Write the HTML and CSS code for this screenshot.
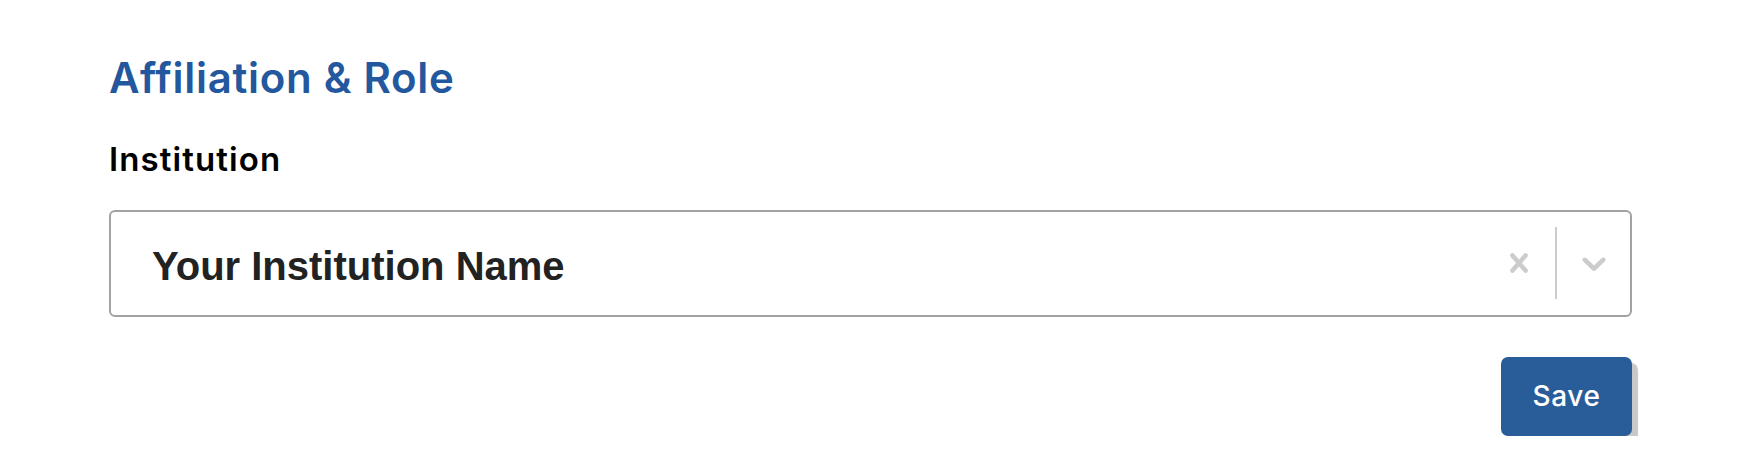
FILE: index.html
```html
<!DOCTYPE html>
<html lang="en">
<head>
<meta charset="utf-8">
<title>Affiliation &amp; Role</title>
<link rel="stylesheet" href="styles.css">
</head>
<body>
<main class="page">
  <section class="section">
    <h2 class="section-title">Affiliation &amp; Role</h2>
    <div class="field">
      <label class="field-label">Institution</label>
      <div class="select">
        <div class="select-value">Your Institution Name</div>
        <div class="select-indicators">
          <div class="indicator">
            <svg class="icon" viewBox="0 0 20 20" width="38" height="38" aria-hidden="true"><path d="M14.348 14.849c-0.469 0.469-1.229 0.469-1.697 0l-2.651-3.030-2.651 3.029c-0.469 0.469-1.229 0.469-1.697 0-0.469-0.469-0.469-1.229 0-1.697l2.758-3.15-2.759-3.152c-0.469-0.469-0.469-1.228 0-1.697s1.228-0.469 1.697 0l2.652 3.031 2.651-3.031c0.469-0.469 1.228-0.469 1.697 0s0.469 1.229 0 1.697l-2.758 3.152 2.758 3.15c0.469 0.469 0.469 1.229 0 1.698z"/></svg>
          </div>
          <span class="separator"></span>
          <div class="indicator">
            <svg class="icon" viewBox="0 0 20 20" width="40" height="40" aria-hidden="true"><path d="M4.516 7.548c0.436-0.446 1.043-0.481 1.576 0l3.908 3.747 3.908-3.747c0.533-0.481 1.141-0.446 1.574 0 0.436 0.445 0.408 1.197 0 1.615-0.406 0.418-4.695 4.502-4.695 4.502-0.217 0.223-0.502 0.335-0.787 0.335s-0.57-0.112-0.789-0.335c0 0-4.287-4.084-4.695-4.502s-0.436-1.170 0-1.615z"/></svg>
          </div>
        </div>
      </div>
    </div>
    <div class="actions">
      <button class="btn-save" type="button">Save</button>
    </div>
  </section>
</main>
</body>
</html>
```

FILE: styles.css
```css
html, body {
  margin: 0;
  padding: 0;
  background: #ffffff;
}

body {
  font-family: "Inter", "Open Sans", sans-serif;
  color: #000;
}

.page {
  padding: 53px 106px 0 109px;
}

.section-title {
  margin: 0;
  font-size: 42px;
  font-weight: 600;
  line-height: 1.2;
  letter-spacing: 0.7px;
  color: #23579e;
}

.field {
  margin-top: 37px;
}

.field-label {
  display: block;
  font-size: 33px;
  font-weight: 600;
  line-height: 1.2;
  letter-spacing: 1.1px;
  color: #000;
}

.select {
  margin-top: 30px;
  box-sizing: border-box;
  height: 107px;
  border: 2px solid #a2a2a2;
  border-radius: 6px;
  display: flex;
  align-items: center;
  background: #fff;
}

.select-value {
  flex: 1;
  padding-left: 41px;
  padding-top: 7px;
  font-family: "Liberation Sans", Arial, sans-serif;
  font-weight: 700;
  font-size: 40px;
  color: #222;
}

.select-indicators {
  display: flex;
  align-items: center;
  align-self: stretch;
}

.indicator {
  width: 73px;
  display: flex;
  align-items: center;
  justify-content: center;
}

.icon {
  fill: #cccccc;
  display: block;
}

.separator {
  align-self: stretch;
  width: 2px;
  margin: 15px 0 16px;
  background: #cccccc;
}

.actions {
  display: flex;
  justify-content: flex-end;
  margin-top: 40px;
}

.btn-save {
  width: 131px;
  height: 79px;
  border: none;
  border-radius: 7px;
  background: #295d99;
  color: #fff;
  font-family: "Inter", "Open Sans", sans-serif;
  font-size: 28px;
  font-weight: 500;
  letter-spacing: 0.6px;
  box-shadow: 6px 6px 1px #c8c8c8;
  cursor: pointer;
}
```
